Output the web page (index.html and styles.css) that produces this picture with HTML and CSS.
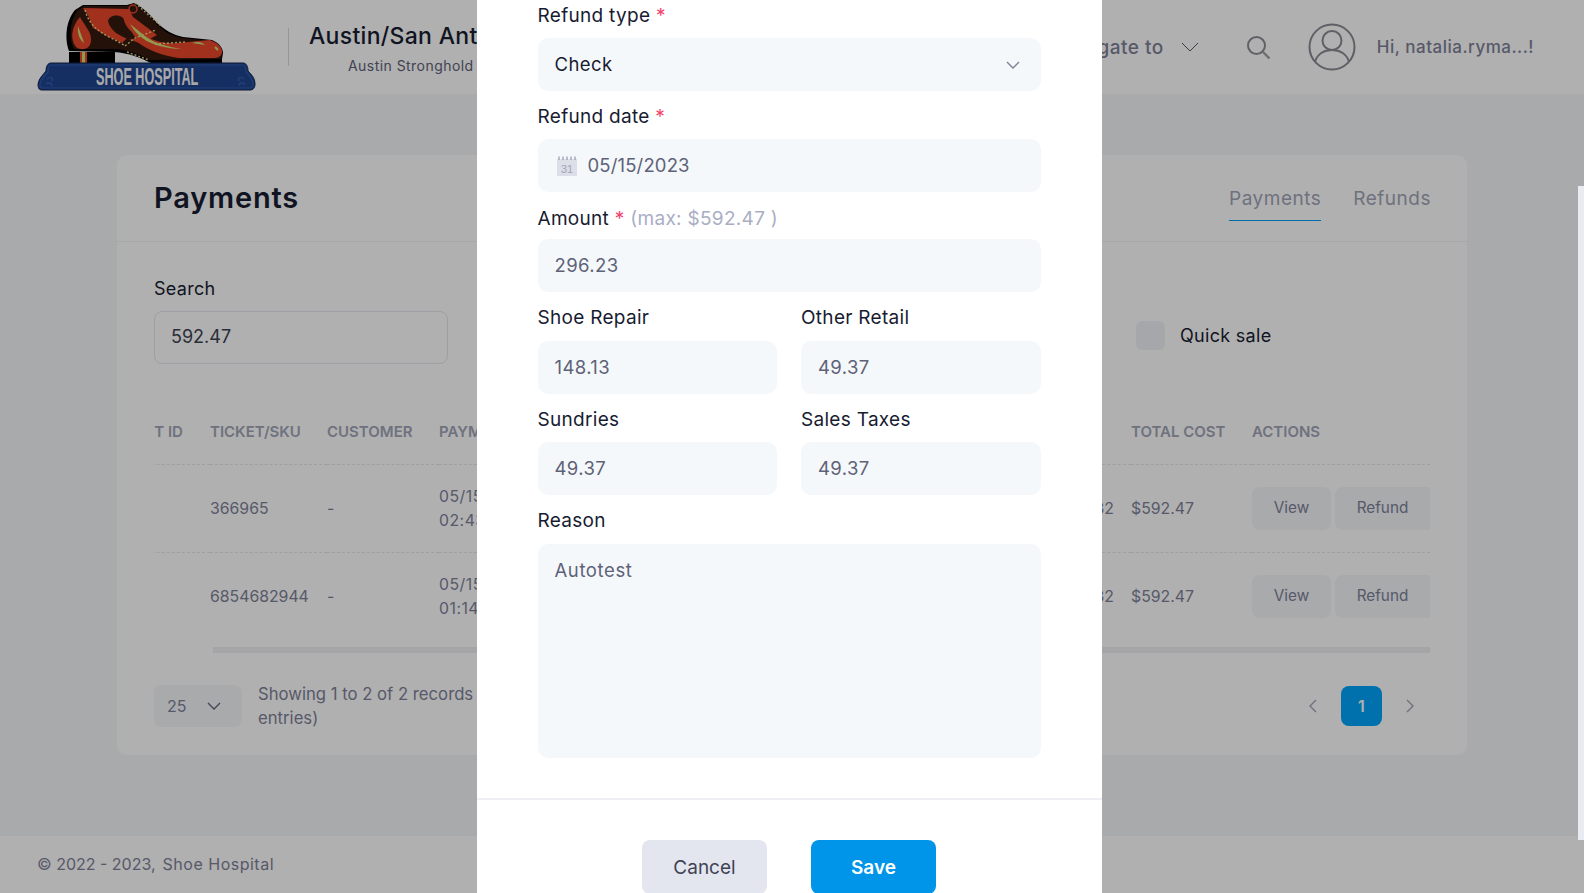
FILE: index.html
```html
<!DOCTYPE html>
<html lang="en">
<head>
<meta charset="utf-8">
<title>Payments - Shoe Hospital</title>
<link rel="stylesheet" href="styles.css">
</head>
<body>
<div class="page">
  <header class="topbar">
    <svg class="logo" viewBox="0 0 222 92" width="222" height="92">
      <rect x="32" y="52" width="46" height="12" fill="#000"/>
      <rect x="43" y="52" width="7" height="12" fill="#ea472b"/>
      <rect x="45" y="52" width="3" height="12" fill="#cfdf73"/>
      <path d="M46 5 L90 5 L97 3 C104 6 113 14 120 23 C128 30 136 35 146 37 L175 40 C182 43 186 48 186 53 L185 59 L185 63 L114 63 C104 58 92 53 77 52 L32 51 C28 40 28 22 38 10 Z" fill="#000"/>
      <path d="M47 6 L90 6 L97 5 C104 8 113 16 120 25 C128 32 136 37 146 38 L174 41 C181 44 185 48 185 53 L184 59 L113 60 C104 55 92 50 78 49 L37 49 C32 40 32 22 40 11 Z" fill="#35190f"/>
      <path d="M46 8 L92 9 L96 17 L120 35 L104 44 L90 38 L85 43 L70 36 L56 28 L51 15 Z" fill="#ea472b"/>
      <path d="M71 21 C73 14 85 14 87 20 C88 27 95 31 100 39 L91 39 C83 36 73 31 71 21 Z" fill="#35190f"/>
      <path d="M43 17 C47 25 55 32 54 41 C53 50 44 51 39 47 C33 40 34 27 43 17 Z" fill="#ea472b"/>
      <path d="M41 26 C40 34 43 40 47 43 C45 36 43 32 41 26 Z" fill="#cfdf73"/>
      <path d="M92 21 L110 37 C120 42 130 44 140 43 L173 40 C181 43 186 48 185 53 C184 57 180 58 176 58 L142 58 C125 56 112 50 103 44 L96 34 Z" fill="#ea472b"/>
      <path d="M93 24 C100 36 112 48 145 49 C132 47 118 44 108 36 Z" fill="#cfdf73"/>
      <path d="M155 43 C160 41 165 42 168 45 C164 44 160 44 155 43 Z" fill="#cfdf73"/>
      <path d="M178 47 L181 50" stroke="#cfdf73" stroke-width="2"/>
      <path d="M48 10 C51 20 55 28 72 37 C78 40 82 42 87 45 M88 46 L98 38 L119 30 M118 44 L148 42 M98 3 L124 26 M90 52 L112 60" fill="none" stroke="#e6d98a" stroke-width="1.4" stroke-dasharray="2 2"/>
      <circle cx="96" cy="9" r="4" fill="none" stroke="#ea472b" stroke-width="1.5"/>
      <path d="M14 63 L206 63 C209 63 211 66 211 71 C214 74 218 78 218 84 C218 88 216 90 213 90 L5 90 C2 90 1 88 1 84 C2 78 6 75 9 71 C9 66 11 63 14 63 Z" fill="#21448f" stroke="#16264d" stroke-width="1"/>
      <path d="M14 65 L206 65 C208 65 209 68 209 72 C212 75 216 79 216 84 C216 87 214 88 213 88 L5 88 C4 88 3 87 3 84 C4 79 8 75 11 72 C11 68 12 65 14 65 Z" fill="none" stroke="#2d5cb0" stroke-width="1.2"/>
      <path d="M10 79 C13 76 17 78 15 81 M9 84 C12 82 16 83 14 86 M207 79 C204 76 200 78 202 81 M208 84 C205 82 201 83 203 86" fill="none" stroke="#2d5cb0" stroke-width="1.6"/>
      <text class="logo-text" transform="translate(59 85) scale(.55 1)">SHOE HOSPITAL</text>
    </svg>
    <div class="divider"></div>
    <div class="branch">
      <div class="branch-name">Austin/San Antonio</div>
      <div class="branch-sub">Austin Stronghold 1</div>
    </div>
    <div class="topbar-right">
      <span class="nav-label">Navigate to</span>
      <svg class="nav-chevron" viewBox="0 0 18 10" width="18" height="10"><path d="M1 1 L9 9 L17 1" fill="none" stroke="#55556a" stroke-width="1"/></svg>
      <svg class="search-icon" viewBox="0 0 24 24" width="24" height="24"><circle cx="10.5" cy="10.5" r="8.5" fill="none" stroke="#8c8c96" stroke-width="2"/><path d="M17 17 L23.5 23.5" stroke="#a0a0a8" stroke-width="2.4"/></svg>
      <svg class="avatar" viewBox="0 0 48 48" width="48" height="48"><circle cx="24" cy="24" r="22.5" fill="none" stroke="#8a8a94" stroke-width="2"/><circle cx="24" cy="17.5" r="9.5" fill="none" stroke="#8a8a94" stroke-width="2"/><path d="M7 39 C9 31 16 27 24 27 C32 27 39 31 41 39" fill="none" stroke="#8a8a94" stroke-width="2"/></svg>
      <span class="greeting">Hi, natalia.ryma...!</span>
    </div>
  </header>

  <main class="content">
    <section class="card">
      <div class="card-head">
        <h1 class="card-title">Payments</h1>
        <nav class="tabs">
          <a class="tab tab-active">Payments</a>
          <a class="tab">Refunds</a>
        </nav>
      </div>
      <div class="card-body">
        <div class="filters">
          <div class="search-field">
            <div class="search-label">Search</div>
            <div class="search-input">592.47</div>
          </div>
          <div class="quick-sale"><span class="checkbox"></span><span>Quick sale</span></div>
        </div>
        <div class="table-wrap">
          <table class="table">
            <colgroup>
              <col class="c-id"><col class="c-ticket"><col class="c-cust"><col class="c-date"><col class="c-mid"><col class="c-mid"><col class="c-mid"><col class="c-tax"><col class="c-total"><col class="c-act">
            </colgroup>
            <thead>
              <tr><th>PAYMENT ID</th><th>TICKET/SKU</th><th>CUSTOMER</th><th>PAYMENT</th><th></th><th></th><th></th><th></th><th>TOTAL COST</th><th>ACTIONS</th></tr>
            </thead>
            <tbody>
              <tr><td></td><td>366965</td><td>-</td><td class="td-date">05/15/2023<br>02:43 PM</td><td></td><td></td><td></td><td>$98.32</td><td>$592.47</td><td><div class="actions"><span class="btn-light">View</span><span class="btn-light btn-refund">Refund</span></div></td></tr>
              <tr><td></td><td>6854682944</td><td>-</td><td class="td-date">05/15/2023<br>01:14 PM</td><td></td><td></td><td></td><td>$98.32</td><td>$592.47</td><td><div class="actions"><span class="btn-light">View</span><span class="btn-light btn-refund">Refund</span></div></td></tr>
            </tbody>
          </table>
        </div>
        <div class="hscroll"><div class="hscroll-thumb"></div></div>
        <div class="table-foot">
          <div class="page-size"><span>25</span><svg viewBox="0 0 14 8" width="14" height="8"><path d="M1 1 L7 7 L13 1" fill="none" stroke="#5e6278" stroke-width="1.3"/></svg></div>
          <div class="records">Showing 1 to 2 of 2 records (filtered from 2 total<br>entries)</div>
          <div class="pager">
            <svg viewBox="0 0 8 14" width="8" height="14"><path d="M7 1 L1 7 L7 13" fill="none" stroke="#a1a5b7" stroke-width="1.4"/></svg>
            <span class="page-num">1</span>
            <svg viewBox="0 0 8 14" width="8" height="14"><path d="M1 1 L7 7 L1 13" fill="none" stroke="#a1a5b7" stroke-width="1.4"/></svg>
          </div>
        </div>
      </div>
    </section>
  </main>

  <footer class="footer"><span>© 2022 - 2023,</span><span class="footer-brand">Shoe Hospital</span></footer>
</div>

<div class="overlay">
  <div class="modal">
    <form class="modal-body">
      <div class="field">
        <div class="label">Refund type <span class="req">*</span></div>
        <div class="control control-select"><span class="value-strong">Check</span>
          <svg viewBox="0 0 14 8" width="14" height="8"><path d="M1 1 L7 7 L13 1" fill="none" stroke="#7e8299" stroke-width="1.4"/></svg>
        </div>
      </div>
      <div class="field">
        <div class="label">Refund date <span class="req">*</span></div>
        <div class="control control-date">
          <svg class="cal" viewBox="0 0 20 20" width="20" height="20"><rect y="3" width="20" height="17" fill="#dcdfe7"/><path d="M2 0.5V4 M6 0.5V4 M10 0.5V4 M14 0.5V4 M18 0.5V4" stroke="#a1a5b7" stroke-width="1.4"/><text class="cal-num" x="10" y="17" text-anchor="middle">31</text></svg>
          <span class="date-value">05/15/2023</span>
        </div>
      </div>
      <div class="field field-amount">
        <div class="label">Amount <span class="req">*</span> <span class="hint">(max: $592.47 )</span></div>
        <div class="control">296.23</div>
      </div>
      <div class="field-row field-row-first">
        <div class="field"><div class="label">Shoe Repair</div><div class="control">148.13</div></div>
        <div class="field"><div class="label">Other Retail</div><div class="control">49.37</div></div>
      </div>
      <div class="field-row">
        <div class="field"><div class="label">Sundries</div><div class="control">49.37</div></div>
        <div class="field"><div class="label">Sales Taxes</div><div class="control">49.37</div></div>
      </div>
      <div class="field field-reason">
        <div class="label">Reason</div>
        <div class="control control-area">Autotest</div>
      </div>
    </form>
    <div class="modal-foot">
      <button class="btn btn-cancel" type="button">Cancel</button>
      <button class="btn btn-save" type="button">Save</button>
    </div>
  </div>
  <div class="page-scroll"></div>
</div>
</body>
</html>
```

FILE: styles.css
```css
* { box-sizing: border-box; }
html, body { margin: 0; height: 100%; overflow: hidden; }
body { font-family: Inter, "Noto Sans", "Liberation Sans", sans-serif; background: #f5f6f9; color: #181c32; }
.page { height: 893px; display: flex; flex-direction: column; }

.topbar { height: 94px; background: #fff; display: flex; align-items: center; padding-left: 37px; padding-right: 50px; }
.logo { flex: none; display: block; align-self: flex-start; }
.logo-text { font-family: "Liberation Sans", sans-serif; font-weight: 700; font-size: 23px; fill: #f4f4f8; }
.divider { width: 1px; height: 38px; background: #d8d8dc; margin: 0 21px 0 29px; }
.branch { margin-top: 6px; }
.branch-name { font-size: 23px; font-weight: 500; letter-spacing: .3px; color: #181c32; white-space: nowrap; line-height: 32px; margin-left: -1px; }
.branch-sub { font-size: 14px; color: #5e6278; padding-left: 38px; line-height: 28px; letter-spacing: .45px; white-space: nowrap; }
.topbar-right { margin-left: auto; display: flex; align-items: center; }
.nav-label { font-size: 19px; font-weight: 500; letter-spacing: .5px; color: #7e8299; margin-right: 17px; }
.nav-chevron { margin-right: 47px; }
.search-icon { margin-right: 38px; }
.avatar { margin-right: 21px; }
.greeting { font-size: 17px; font-weight: 500; color: #7e8299; letter-spacing: .5px; }

.content { flex: 1; padding: 61px 117px 0; }
.card { height: 600px; background: #fff; border-radius: 10px; }
.card-head { height: 87px; border-bottom: 1px solid #eff2f5; display: flex; justify-content: space-between; padding: 0 36px 0 37px; }
.card-title { margin: 0; font-size: 29px; line-height: 86px; font-weight: 600; color: #181c32; letter-spacing: .8px; }
.tabs { display: flex; gap: 32px; }
.tab { display: block; height: 66px; line-height: 87px; font-size: 19px; letter-spacing: .5px; color: #a1a5b7; white-space: nowrap; }
.tab-active { border-bottom: 1px solid #009ef7; }

.card-body { padding: 34px 37px 0; }
.filters { display: flex; align-items: flex-end; justify-content: space-between; }
.search-field { width: 294px; }
.search-label { font-size: 18px; line-height: 26px; margin-bottom: 9px; letter-spacing: .3px; }
.search-input { height: 53px; border: 1px solid #e4e6ef; border-radius: 8px; padding: 0 16px; line-height: 50px; font-size: 18px; color: #3f4254; }
.quick-sale { width: 294px; display: flex; align-items: center; gap: 15px; font-size: 18px; letter-spacing: .3px; margin-bottom: 14px; }
.checkbox { width: 29px; height: 29px; border-radius: 6px; background: #f1f2f6; }

.table-wrap { margin-top: 46px; overflow: hidden; }
.table { table-layout: fixed; border-collapse: collapse; width: 1339px; margin-left: -63px; }
.c-id { width: 119px; } .c-ticket { width: 117px; } .c-cust { width: 112px; } .c-date { width: 172px; }
.c-mid { width: 150px; } .c-tax { width: 70px; } .c-total { width: 121px; } .c-act { width: 178px; }
.table th { text-align: left; height: 54px; font-size: 15px; font-weight: 600; color: #a1a5b7; white-space: nowrap; padding: 0 0 10px; overflow: hidden; }
.table td { height: 88px; font-size: 15.8px; line-height: 24px; color: #7e8299; padding: 2px 0 0; overflow: hidden; white-space: nowrap; }
.table .td-date { letter-spacing: .5px; }
.table tr { border-bottom: 1px dashed #e4e6ef; }
.table tbody tr:last-child { border-bottom: 0; }
.actions { display: flex; gap: 4px; margin-top: -2px; }
.btn-light { width: 79px; height: 43px; flex: none; display: flex; align-items: center; justify-content: center; background: #f5f6f9; border-radius: 8px; font-size: 15.3px; color: #7e8299; }
.btn-refund { width: 95px; border-radius: 8px 2px 2px 8px; }

.hscroll { height: 6px; margin-top: 7px; padding-left: 59px; }
.hscroll-thumb { height: 6px; background: #eff0f2; }

.table-foot { display: flex; align-items: center; margin-top: 32px; height: 42px; }
.page-size { width: 88px; height: 42px; background: #f5f6f9; border-radius: 8px; display: flex; align-items: center; justify-content: space-between; padding: 0 21px 0 13px; font-size: 16px; color: #7e8299; }
.records { margin-left: 16px; font-size: 16.7px; line-height: 24px; color: #7e8299; white-space: nowrap; }
.pager { margin-left: auto; display: flex; align-items: center; gap: 24px; margin-right: 16px; }
.page-num { width: 41px; height: 40px; border-radius: 8px; background: #00a4f9; color: #fff; font-size: 16px; font-weight: 600; display: flex; align-items: center; justify-content: center; }

.footer { height: 57px; background: #fff; display: flex; align-items: center; gap: 7px; padding-left: 37px; font-size: 16px; color: #7e8299; padding-bottom: 2px; }
.footer-brand { letter-spacing: .5px; }

.overlay { position: fixed; inset: 0; background: rgba(0,0,0,.31); display: flex; justify-content: center; padding-right: 6px; overflow: hidden; }
.modal { width: 625px; height: 940px; background: #fff; flex: none; }
.modal-body { padding: 2px 61px 0; height: 798px; }
.field { margin-bottom: 12px; }
.field-row { display: grid; grid-template-columns: 1fr 1fr; gap: 24px; }
.field-row .field { min-width: 0; }
.field-amount { margin-top: -1px; margin-bottom: 13px; }
.field-reason { padding-top: 1px; }
.label { font-size: 19px; line-height: 26px; margin-bottom: 10px; padding-top: 1px; height: 26px; letter-spacing: .3px; color: #181c32; white-space: nowrap; }
.field-amount .label { padding-top: 3px; }
.field-row-first .label, .field-reason .label { padding-top: 0; }
.req { color: #f1416c; }
.hint { color: #a9aec4; }
.control { height: 53px; border-radius: 10px; background: #f5f8fa; padding: 0 17px 2px; display: flex; align-items: center; font-size: 18.5px; letter-spacing: .4px; color: #5e6278; }
.control-select { justify-content: space-between; padding-right: 21px; padding-bottom: 0; }
.value-strong { color: #181c32; margin-bottom: 2px; }
.control-date { gap: 11px; padding-left: 19px; padding-bottom: 0; }
.date-value { letter-spacing: .15px; margin-bottom: 2px; }
.cal { flex: none; }
.cal-num { font-family: "Liberation Sans", sans-serif; font-size: 11px; fill: #a1a5b7; letter-spacing: 0; }
.control-area { height: 214px; align-items: flex-start; padding-top: 15px; letter-spacing: .6px; }
.modal-foot { border-top: 2px solid #eff0f5; display: flex; justify-content: center; gap: 44px; padding-top: 40px; }
.btn { width: 125px; height: 54px; border: 0; border-radius: 8px; font-family: inherit; font-size: 19px; }
.btn-cancel { background: #e4e6ef; color: #3f4254; }
.btn-save { background: #0095e8; color: #fff; font-weight: 600; }
.page-scroll { position: absolute; right: 0; top: 186px; width: 6px; height: 654px; background: #e9ebf3; }
```
